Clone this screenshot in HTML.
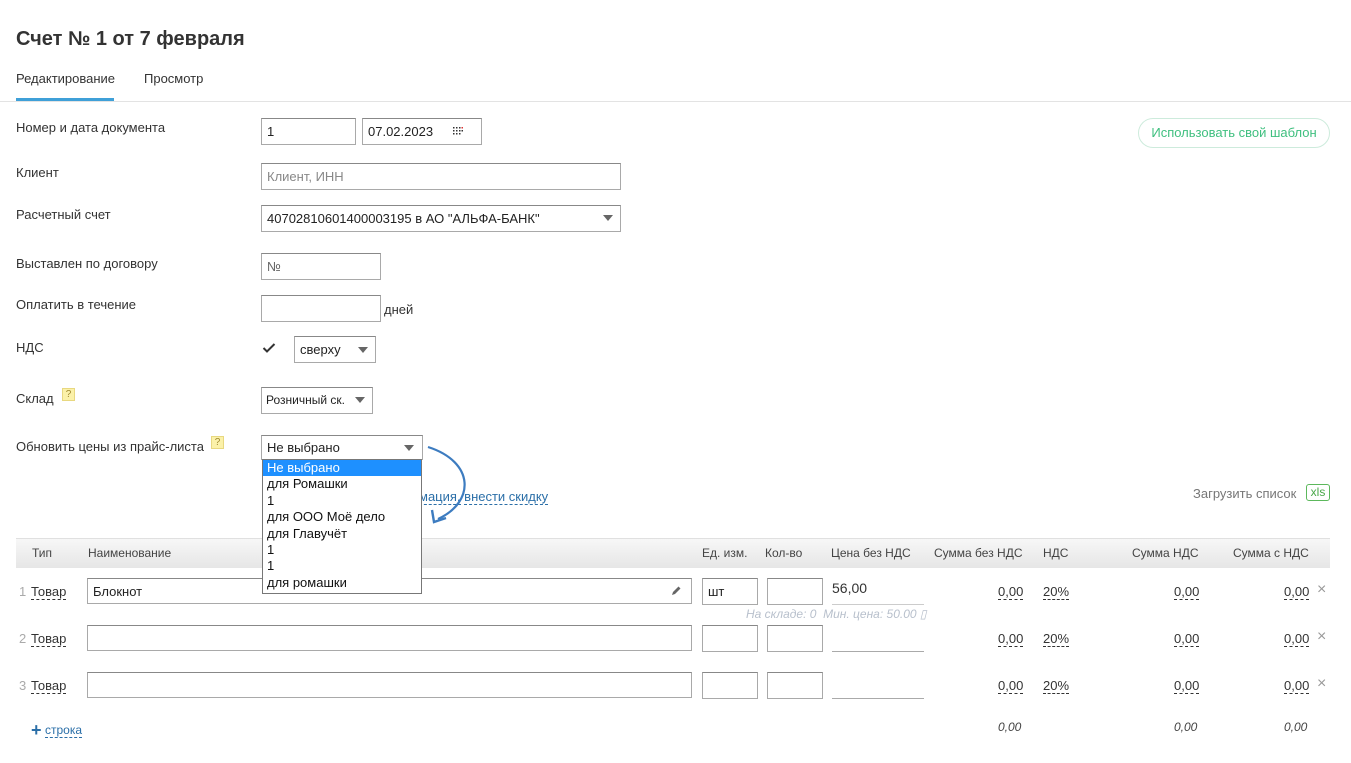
<!DOCTYPE html>
<html><head><meta charset="utf-8"><style>
*{box-sizing:border-box;margin:0;padding:0}
body{width:1351px;height:763px;background:#fff;font-family:"Liberation Sans",Arial,sans-serif;font-size:13px;color:#333;position:relative;overflow:hidden}
.a{position:absolute;white-space:nowrap}
.in{position:absolute;border:1px solid #a9a9a9;border-top-color:#888;background:#fff;height:27px;padding:0 5px;line-height:25px;font-size:13px;color:#222}
.tri{position:absolute;width:0;height:0;border-left:5px solid transparent;border-right:5px solid transparent;border-top:6px solid #666}
.dash{border-bottom:1px dashed #333;line-height:14px}
.q{position:absolute;width:13px;height:13px;background:#fbf1a9;border:1px solid #e8d880;font-size:10px;color:#a08a30;text-align:center;line-height:11px}
.gray{color:#777}
.x{color:#999;font-size:16px}
.it{font-style:italic;color:#444}
</style></head><body>
<div class="a" style="left:16px;top:28px;font-size:20px;font-weight:bold;color:#333">Счет № 1 от 7 февраля</div>
<div class="a" style="left:16px;top:71px">Редактирование</div>
<div class="a" style="left:144px;top:71px">Просмотр</div>
<div class="a" style="left:16px;top:98px;width:98px;height:3px;background:#3fa0d8"></div>
<div class="a" style="left:0;top:101px;width:1351px;height:1px;background:#e3e3e3"></div>

<div class="a" style="left:16px;top:120px">Номер и дата документа</div>
<div class="in" style="left:261px;top:118px;width:95px">1</div>
<div class="in" style="left:362px;top:118px;width:120px">07.02.2023</div>
<svg class="a" style="left:453px;top:127px" width="10" height="8"><g fill="#333"><rect x="0" y="0" width="1.5" height="1.5"/><rect x="3" y="0" width="1.5" height="1.5"/><rect x="6" y="0" width="1.5" height="1.5"/><rect x="8.5" y="0" width="1.5" height="1.5" fill="#d33"/><rect x="0" y="3" width="1.5" height="1.5"/><rect x="3" y="3" width="1.5" height="1.5"/><rect x="6" y="3" width="1.5" height="1.5"/><rect x="8.5" y="3" width="1.5" height="1.5"/><rect x="0" y="6" width="1.5" height="1.5"/><rect x="3" y="6" width="1.5" height="1.5"/><rect x="6" y="6" width="1.5" height="1.5"/></g></svg>
<div class="a" style="left:1138px;top:118px;width:192px;height:30px;border:1px solid #cdebdc;border-radius:15px;color:#3fbf7f;text-align:center;line-height:28px">Использовать свой шаблон</div>

<div class="a" style="left:16px;top:165px">Клиент</div>
<div class="in" style="left:261px;top:163px;width:360px;color:#888">Клиент, ИНН</div>
<div class="a" style="left:16px;top:207px">Расчетный счет</div>
<div class="in" style="left:261px;top:205px;width:360px">40702810601400003195 в АО "АЛЬФА-БАНК"</div>
<div class="tri" style="left:603px;top:215px"></div>
<div class="a" style="left:16px;top:256px">Выставлен по договору</div>
<div class="in" style="left:261px;top:253px;width:120px;color:#666">№</div>
<div class="a" style="left:16px;top:297px">Оплатить в течение</div>
<div class="in" style="left:261px;top:295px;width:120px"></div>
<div class="a" style="left:384px;top:302px">дней</div>
<div class="a" style="left:16px;top:340px">НДС</div>
<svg class="a" style="left:262px;top:342px" width="14" height="12"><path d="M1.5 6 L5 9.5 L12.5 2" fill="none" stroke="#333" stroke-width="2"/></svg>
<div class="in" style="left:294px;top:336px;width:82px;height:27px">сверху</div>
<div class="tri" style="left:358px;top:347px"></div>
<div class="a" style="left:16px;top:391px">Склад</div>
<div class="q" style="left:62px;top:388px">?</div>
<div class="in" style="left:261px;top:387px;width:112px;font-size:12px;padding:0 4px">Розничный ск.</div>
<div class="tri" style="left:355px;top:397px"></div>
<div class="a" style="left:16px;top:439px">Обновить цены из прайс-листа</div>
<div class="q" style="left:211px;top:436px">?</div>
<div class="in" style="left:261px;top:435px;width:162px;height:25px;line-height:23px">Не выбрано</div>
<div class="tri" style="left:404px;top:445px"></div>

<div class="a" style="left:419px;top:489px;color:#2b6fa8" ><span class="dash" style="border-color:#2b6fa8">мация,</span> <span class="dash" style="border-color:#2b6fa8">внести скидку</span></div>

<div class="a gray" style="left:1193px;top:486px">Загрузить список</div>
<div class="a" style="left:1306px;top:484px;width:24px;height:17px;border:1px solid #5cb85c;border-radius:3px;color:#4aa84a;font-size:12px;text-align:center;line-height:15px">xls</div>

<div class="a" style="left:16px;top:538px;width:1314px;height:30px;background:linear-gradient(#f7f7f7,#e6e6e6);border-top:1px solid #e0e0e0;font-size:12px;color:#444;line-height:28px">
<span class="a" style="left:16px">Тип</span><span class="a" style="left:72px">Наименование</span>
<span class="a" style="left:686px">Ед. изм.</span><span class="a" style="left:749px">Кол-во</span><span class="a" style="left:815px">Цена без НДС</span><span class="a" style="left:918px">Сумма без НДС</span><span class="a" style="left:1027px">НДС</span><span class="a" style="left:1116px">Сумма НДС</span><span class="a" style="left:1217px">Сумма с НДС</span></div>

<div class="a gray" style="left:19px;top:584px;color:#aaa">1</div><div class="a" style="left:31px;top:584px"><span class="dash">Товар</span></div>
<div class="in" style="left:87px;top:578px;width:605px;height:26px">Блокнот</div>
<svg class="a" style="left:670px;top:585px" width="12" height="12"><path d="M2 10 L3 7 L8.5 1.5 L10.5 3.5 L5 9 Z" fill="#666"/></svg>
<div class="in" style="left:702px;top:578px;width:56px">шт</div>
<div class="in" style="left:767px;top:578px;width:56px"></div>
<div class="a" style="left:832px;top:580px;font-size:14px">56,00</div>
<div class="a" style="left:832px;top:604px;width:92px;height:1px;background:#ccc"></div>
<div class="a" style="left:746px;top:607px;font-style:italic;color:#b8c0cc;font-size:12px">На складе: 0&nbsp; Мин. цена: 50.00 ▯</div>

<div class="a gray" style="left:19px;top:631px;color:#aaa">2</div><div class="a" style="left:31px;top:631px"><span class="dash">Товар</span></div>
<div class="in" style="left:87px;top:625px;width:605px;height:26px"></div>
<div class="in" style="left:702px;top:625px;width:56px"></div>
<div class="in" style="left:767px;top:625px;width:56px"></div>
<div class="a" style="left:832px;top:651px;width:92px;height:1px;background:#aaa"></div>

<div class="a gray" style="left:19px;top:678px;color:#aaa">3</div><div class="a" style="left:31px;top:678px"><span class="dash">Товар</span></div>
<div class="in" style="left:87px;top:672px;width:605px;height:26px"></div>
<div class="in" style="left:702px;top:672px;width:56px"></div>
<div class="in" style="left:767px;top:672px;width:56px"></div>
<div class="a" style="left:832px;top:698px;width:92px;height:1px;background:#aaa"></div>

<div class="a" style="left:998px;top:584px"><span class="dash">0,00</span></div><div class="a" style="left:1043px;top:584px"><span class="dash">20%</span></div><div class="a" style="left:1174px;top:584px"><span class="dash">0,00</span></div><div class="a" style="left:1284px;top:584px"><span class="dash">0,00</span></div><div class="a x" style="left:1317px;top:581px">×</div>
<div class="a" style="left:998px;top:631px"><span class="dash">0,00</span></div><div class="a" style="left:1043px;top:631px"><span class="dash">20%</span></div><div class="a" style="left:1174px;top:631px"><span class="dash">0,00</span></div><div class="a" style="left:1284px;top:631px"><span class="dash">0,00</span></div><div class="a x" style="left:1317px;top:628px">×</div>
<div class="a" style="left:998px;top:678px"><span class="dash">0,00</span></div><div class="a" style="left:1043px;top:678px"><span class="dash">20%</span></div><div class="a" style="left:1174px;top:678px"><span class="dash">0,00</span></div><div class="a" style="left:1284px;top:678px"><span class="dash">0,00</span></div><div class="a x" style="left:1317px;top:675px">×</div>

<div class="a" style="left:31px;top:720px;color:#2b6fa8;font-size:18px;font-weight:bold">+</div>
<div class="a" style="left:45px;top:723px;color:#2b6fa8;font-size:12px"><span class="dash" style="border-color:#2b6fa8">строка</span></div>
<div class="a it" style="left:998px;top:720px;font-size:12px">0,00</div>
<div class="a it" style="left:1174px;top:720px;font-size:12px">0,00</div>
<div class="a it" style="left:1284px;top:720px;font-size:12px">0,00</div>

<svg class="a" style="left:420px;top:444px;z-index:10" width="50" height="85"><path d="M8 3 C55 18 55 58 18 75" fill="none" stroke="#3d7cc0" stroke-width="2.2"/><path d="M12 66 L14 78 L26 74" fill="none" stroke="#3d7cc0" stroke-width="2.4"/></svg>

<div class="a" style="left:262px;top:459px;width:160px;height:135px;border:1px solid #777;background:#fff;line-height:16.4px;padding-left:4px;color:#111;z-index:20">
<div style="background:#1e90ff;color:#fff;margin-left:-4px;padding-left:4px">Не выбрано</div>
<div>для Ромашки</div><div>1</div><div>для ООО Моё дело</div><div>для Главучёт</div><div>1</div><div>1</div><div>для ромашки</div></div>
</body></html>
